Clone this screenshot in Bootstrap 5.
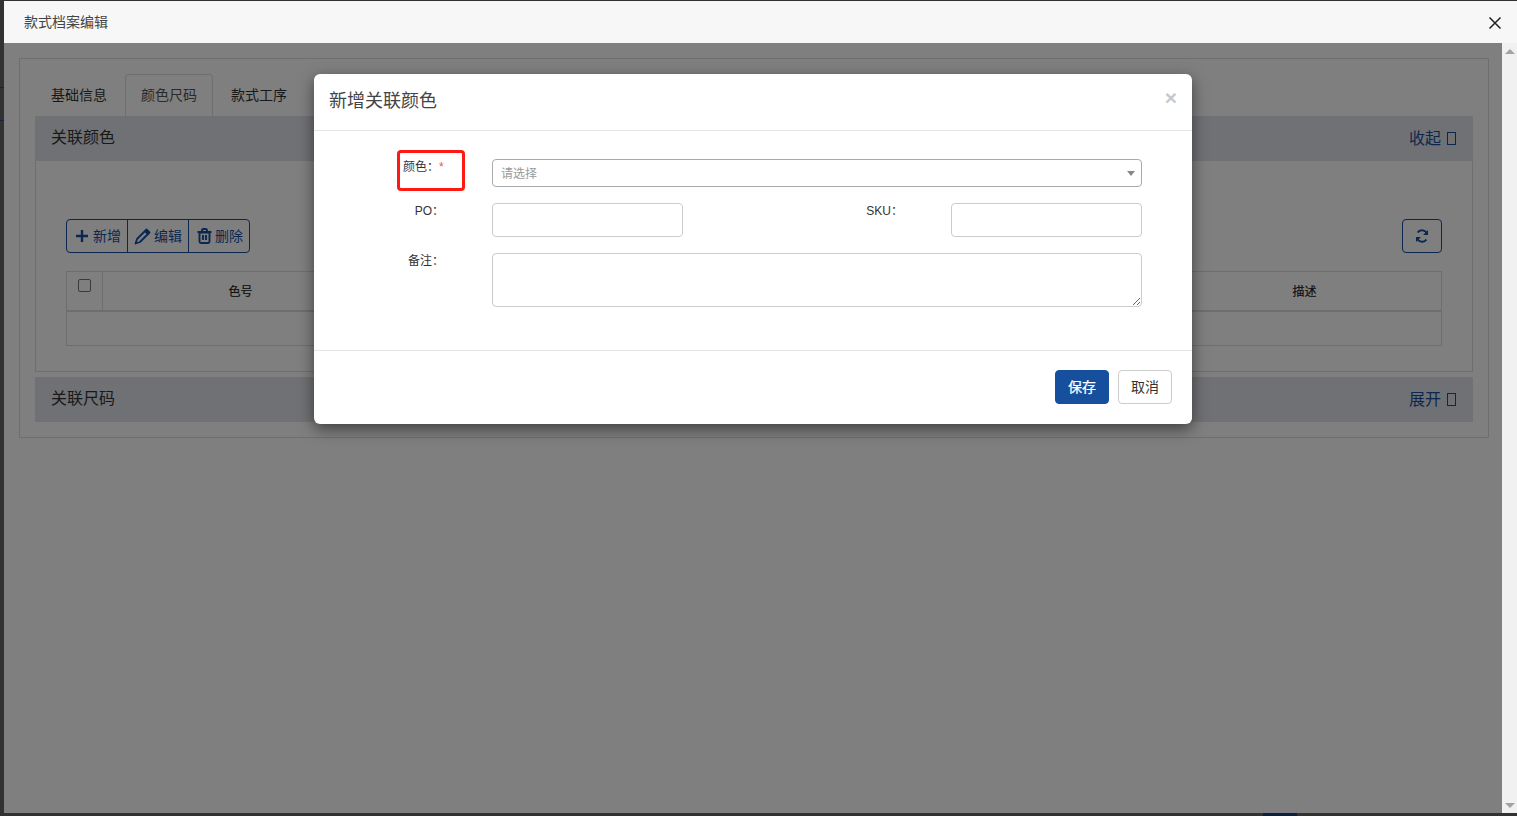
<!DOCTYPE html>
<html lang="zh-CN">
<head>
<meta charset="utf-8">
<title>款式档案编辑</title>
<link href="https://cdn.jsdelivr.net/npm/bootstrap@5.3.0/dist/css/bootstrap.min.css" rel="stylesheet">
<style>
html,body{height:100%;overflow:hidden}
body{font-family:"Liberation Sans","Noto Sans CJK SC",sans-serif;font-size:14px;color:#333;background-color:#323232;background-image:linear-gradient(#12233f,#12233f),linear-gradient(#12233f,#12233f),linear-gradient(#0c1f3f,#0c1f3f);background-repeat:no-repeat;background-size:4px 1px,4px 1px,34px 3px;background-position:0 87px,0 120px,1263px 813px}
.win-frame{margin:1px 0 0 4px;height:812px;background:#fff}
.win-head{height:42px;background:#f7f7f7;padding:0 15px 0 20px;flex:none}
.win-title{font-size:14px;line-height:16px;color:#444;margin-bottom:1px}
.win-close{width:14px;height:14px;padding:0;border:0;background:none;margin-top:2px}
.win-main{height:770px}
.win-content{position:relative;overflow:hidden;min-width:0}
.v-scroll{width:15px;flex:none;background:#f1f1f1;padding:6px 0 5px}
.tri-up{width:0;height:0;border:5px solid transparent;border-top:0;border-bottom:5px solid #a3a3a3}
.tri-down{width:0;height:0;border:5px solid transparent;border-bottom:0;border-top:5px solid #a3a3a3}
.outer-panel{margin:15px 13px 0 15px;border:1px solid #ddd;padding:15px;height:380px}
.tab-strip{border:0;height:42px;gap:2px;flex-wrap:nowrap}
.tab-strip .nav-link{width:88px;height:42px;padding:0;text-align:center;line-height:40px;font-size:14px;color:#333;border:1px solid transparent;border-bottom:0;border-radius:4px 4px 0 0;margin:0;background:none}
.tab-strip .nav-link.active{color:#555;border-color:#ddd;background:#fff}
.sec-head{height:45px;background:#e0e3e9;padding:0 17px 0 16px;font-size:16px;color:#333}
.sec-name{padding-bottom:2px}
.sec-toggle{color:#164f9e;text-decoration:none}
.tofu{display:inline-block;width:9px;height:13px;border:1.5px solid #164f9e;margin-left:6px;vertical-align:-1px}
.sec-body{height:211px;border:1px solid #ddd;border-top:0;padding:58px 30px 0;margin-bottom:5px}
.tool-group .btn{height:34px;padding:0 0 0 8px;font-size:14px;line-height:32px;color:#164f9e;border-color:#164f9e;background:#fff;border-radius:4px;white-space:nowrap;width:62px;display:flex;align-items:center;gap:4px}
.tool-group .btn+.btn{margin-left:-1px;border-radius:0}
.tool-group .btn:first-child{border-radius:4px 0 0 4px}
.tool-group .btn:last-child{border-radius:0 4px 4px 0}
.tool-group .btn.tool-edit{padding-left:6px;gap:3px}
.tool-group .btn.tool-del{padding-left:8px;gap:3px}
.refresh-btn{width:40px;height:34px;padding:0;border:1px solid #164f9e;color:#164f9e;border-radius:4px;background:#fff}
.grid-table{margin:18px 0 0;table-layout:fixed;width:100%;border-color:#ddd;--bs-table-bg:#fff}
.grid-table th{height:39px;padding:3px 0 0 2px;font-size:12px;font-weight:400;color:#222;text-align:center;border-bottom:2px solid #ddd;vertical-align:middle;-webkit-text-stroke:.2px #222}
.grid-table td{height:35px;padding:0}
.th-check{width:36px}
.th-wide{width:274px}
.th-last{width:276px}
.th-check .form-check-input{width:13px;height:13px;border-radius:2px;border-color:#767676;display:block;margin:7px 0 0 11px}
.grid-table th.th-check{vertical-align:top;padding:0}
.dim-layer{position:absolute;inset:0;background:rgba(0,0,0,.5)}
.dlg{position:absolute;left:310px;top:31px;width:878px;height:350px;border:0;border-radius:6px;box-shadow:0 5px 15px rgba(0,0,0,.5);background:#fff;display:flex;flex-direction:column}
.dlg .modal-header{height:57px;padding:0 15px;border-bottom:1px solid #e5e5e5;flex:none;align-items:center}
.dlg-title{font-size:18px;font-weight:400;color:#444;margin:0;line-height:24px;padding-bottom:2px}
.dlg-x{font-size:21px;font-weight:700;line-height:1;color:#c8c8c8;border:0;background:none;padding:0;margin:0 0 10px;font-family:"Liberation Sans",sans-serif}
.dlg .modal-body{padding:28px 50px 43px 0;flex:none;height:219px}
.form-rows{display:grid;grid-template-columns:178px 191px 268px 191px;row-gap:16px}
.f-label{font-size:12px;line-height:14px;color:#333;text-align:right;padding:1px 48px 0 0;margin:0}
.req-star{color:#e55;font-size:12px;line-height:10px;display:inline-block;width:5px;text-align:left}
.sel-box{grid-column:2 / 5;height:28px;border:1px solid #aaa;border-radius:4px;padding:1px 8px 0;font-size:12px;color:#999;display:flex;align-items:center;justify-content:space-between;background:#fff}
.sel-arrow{width:0;height:0;border:4.5px solid transparent;border-bottom:0;border-top:5px solid #888;margin-right:-2px}
.txt-in{height:34px;padding:6px 12px;font-size:12px;border-color:#ccc;border-radius:4px;min-height:0}
.txt-area{grid-column:2 / 5;height:54px;min-height:0;padding:6px 12px;font-size:12px;border-color:#ccc;border-radius:4px}
.dlg .modal-footer{height:74px;padding:19px 20px 0 0;border-top:1px solid #e5e5e5;gap:9px;flex:none;align-items:flex-start}
.dlg .modal-footer .btn{margin:0;width:54px;height:34px;padding:0;font-size:14px;border-radius:4px;line-height:32px}
.btn-save{background:#154f9e;border-color:#154f9e;color:#fff;-webkit-text-stroke:.25px #fff}
.btn-cancel{background:#fff;border-color:#ccc;color:#333}
.red-mark{position:absolute;left:83px;top:76px;width:68px;height:41px;border:3px solid #fe1a12;border-radius:4px;pointer-events:none}
</style>
</head>
<body>
<div class="win-frame d-flex flex-column">
  <header class="win-head d-flex align-items-center justify-content-between">
    <span class="win-title">款式档案编辑</span>
    <button class="win-close d-flex" type="button" aria-label="关闭"><svg width="14" height="14" viewBox="0 0 14 14"><path d="M1.5 1.5l11 11M12.5 1.5l-11 11" stroke="#222" stroke-width="1.5" fill="none"/></svg></button>
  </header>
  <div class="win-main d-flex">
    <div class="win-content flex-grow-1">
      <div class="outer-panel">
        <ul class="nav tab-strip">
          <li class="nav-item"><a class="nav-link" href="#">基础信息</a></li>
          <li class="nav-item"><a class="nav-link active" href="#">颜色尺码</a></li>
          <li class="nav-item"><a class="nav-link" href="#">款式工序</a></li>
        </ul>
        <div class="sec-head d-flex align-items-center justify-content-between">
          <span class="sec-name">关联颜色</span>
          <a class="sec-toggle" href="#">收起<span class="tofu"></span></a>
        </div>
        <div class="sec-body">
          <div class="d-flex justify-content-between">
            <div class="btn-group tool-group">
              <button class="btn" type="button"><svg width="14" height="14" viewBox="0 0 14 14" class="flex-shrink-0"><path d="M7 1v12M1 7h12" stroke="#164f9e" stroke-width="2.4" fill="none"/></svg>新增</button>
              <button class="btn tool-edit" type="button"><svg width="17" height="17" viewBox="0 0 17 17" class="flex-shrink-0"><path d="M12.5 1.5l3 3-9.5 9.5-4.5 1.5 1.5-4.5z" stroke="#164f9e" stroke-width="1.8" fill="none" stroke-linejoin="round"/><path d="M12.5 1.5l3 3-2.2 2.2-3-3z" fill="#164f9e"/></svg>编辑</button>
              <button class="btn tool-del" type="button"><svg width="15" height="16" viewBox="0 0 15 16" class="flex-shrink-0"><path d="M2.5 4.5h10v9a1.5 1.5 0 0 1-1.5 1.5H4a1.5 1.5 0 0 1-1.5-1.5z M.5 4h14 M5 4V2.2A1.2 1.2 0 0 1 6.2 1h2.6A1.2 1.2 0 0 1 10 2.2V4 M6 7v5M9 7v5" stroke="#164f9e" stroke-width="1.9" fill="none"/></svg>删除</button>
            </div>
            <button class="refresh-btn d-flex align-items-center justify-content-center" type="button" aria-label="刷新"><svg width="14" height="14" viewBox="0 0 14 14"><path d="M12 5.2A5.2 5.2 0 0 0 2.6 3.6M2 8.8a5.2 5.2 0 0 0 9.4 1.6" stroke="#164f9e" stroke-width="1.9" fill="none"/><path d="M13 1v5H8zM1 13V8h5z" fill="#164f9e"/></svg></button>
          </div>
          <table class="table table-bordered grid-table">
            <thead><tr>
              <th class="th-check"><input class="form-check-input" type="checkbox" aria-label="全选"></th>
              <th class="th-wide">色号</th>
              <th></th>
              <th class="th-last">描述</th>
            </tr></thead>
            <tbody><tr><td colspan="4"></td></tr></tbody>
          </table>
        </div>
        <div class="sec-head d-flex align-items-center justify-content-between">
          <span class="sec-name">关联尺码</span>
          <a class="sec-toggle" href="#">展开<span class="tofu"></span></a>
        </div>
      </div>
      <div class="dim-layer"></div>
      <div class="dlg">
        <div class="modal-header justify-content-between">
          <h5 class="dlg-title">新增关联颜色</h5>
          <button class="dlg-x" type="button" aria-label="关闭">×</button>
        </div>
        <div class="modal-body">
          <form class="form-rows">
            <label class="f-label">颜色：<span class="req-star">*</span></label>
            <div class="sel-box"><span>请选择</span><span class="sel-arrow"></span></div>
            <label class="f-label">PO：</label>
            <input class="form-control txt-in" type="text">
            <label class="f-label">SKU：</label>
            <input class="form-control txt-in" type="text">
            <label class="f-label">备注：</label>
            <textarea class="form-control txt-area"></textarea>
          </form>
        </div>
        <div class="modal-footer">
          <button class="btn btn-save" type="button">保存</button>
          <button class="btn btn-cancel" type="button">取消</button>
        </div>
        <div class="red-mark"></div>
      </div>
    </div>
    <div class="v-scroll d-flex flex-column justify-content-between align-items-center">
      <span class="tri-up"></span>
      <span class="tri-down"></span>
    </div>
  </div>
</div>
<script src="https://cdn.jsdelivr.net/npm/bootstrap@5.3.0/dist/js/bootstrap.bundle.min.js"></script>
</body>
</html>
